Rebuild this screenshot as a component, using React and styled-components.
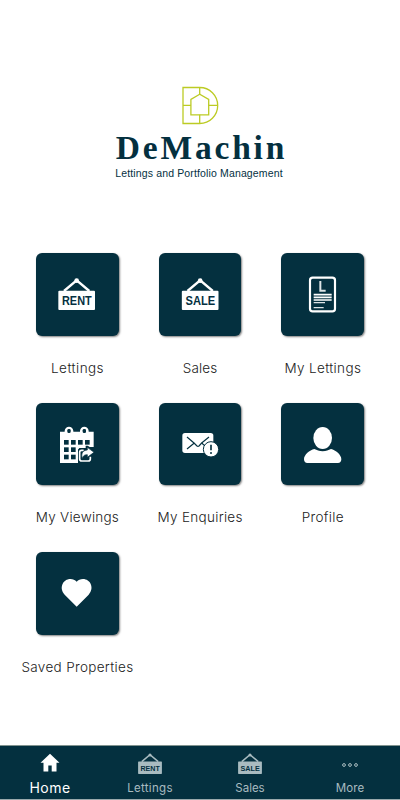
import React from 'react';
import styled, { createGlobalStyle } from 'styled-components';

const NAVY = '#04303f';

const GlobalStyle = createGlobalStyle`
  * {
    box-sizing: border-box;
  }

  body {
    margin: 0;
    background-color: #fff;
    font-family: 'Inter', 'Open Sans', sans-serif;
  }
`;

const Screen = styled.div`
  display: flex;
  flex-direction: column;
  width: 400px;
  height: 800px;
  overflow: hidden;
  background-color: #fff;
`;

const Header = styled.header`
  display: flex;
  flex-direction: column;
  align-items: center;
  height: 253px;
  padding-top: 86px;

  svg {
    display: block;
  }
`;

const BrandName = styled.h1`
  margin: 4px 0 0 3px;
  color: ${NAVY};
  font-family: 'Liberation Serif', serif;
  font-size: 33.5px;
  font-weight: 700;
  line-height: 38px;
  letter-spacing: 2.8px;
  white-space: nowrap;
`;

const Tagline = styled.p`
  margin: 0 2px 0 0;
  color: ${NAVY};
  font-family: 'Liberation Sans', sans-serif;
  font-size: 10.5px;
  line-height: 13px;
  letter-spacing: 0.14px;
  white-space: nowrap;
`;

const Menu = styled.main`
  display: grid;
  grid-template-columns: repeat(3, 1fr);
  grid-auto-rows: 149.6px;
  flex: 1;
  padding: 0 16px;
`;

const MenuItem = styled.div`
  display: flex;
  flex-direction: column;
  align-items: center;
`;

const Tile = styled.div`
  width: 82.5px;
  height: 82.5px;
  border-radius: 6px;
  background-color: ${NAVY};
  box-shadow: 1px 1px 2px rgba(0, 0, 0, 0.5);

  svg {
    display: block;
    width: 100%;
    height: 100%;
  }
`;

const Label = styled.span`
  margin-top: 22px;
  color: #222;
  font-size: 13.5px;
  font-weight: 300;
  line-height: 20px;
  letter-spacing: ${({ $spacing }) => $spacing}px;
  margin-right: ${({ $spacing }) => -$spacing}px;
  white-space: nowrap;
`;

const TabBar = styled.nav`
  display: flex;
  height: 55px;
  border-top: 1px solid #81938f;
  border-bottom: 1px solid #9aa9ac;
  background-color: ${NAVY};
`;

const Tab = styled.div`
  display: flex;
  flex: 1;
  flex-direction: column;
  align-items: center;
  justify-content: space-between;
  padding: 7px 0 2px;
  color: ${({ $active }) => ($active ? '#fff' : '#a9bbc0')};

  svg {
    display: block;
  }
`;

const TabLabel = styled.span`
  font-size: ${({ $size }) => $size}px;
  font-weight: 400;
  line-height: 18px;
  letter-spacing: ${({ $spacing }) => $spacing}px;
`;

const LogoMark = () => (
  <svg width='38' height='39' viewBox='0 0 38 39' fill='none' stroke='#bccb24' strokeWidth='1.3'>
    <path d='M2 1.5h16.7a18 18 0 0 1 0 36H2z' />
    <path d='M18.7 8.2l-8.8 5.2v15.4h17.8V13.4z' />
    <path d='M18.7 1.5v6.7M18.7 28.8v8.7M2 19.4h7.9M27.7 19.4h9' />
  </svg>
);

const SignShape = ({ text, color, ink }) => (
  <>
    <path d='M84 114l38-32 38 32' fill='none' stroke={color} strokeWidth='7' />
    <circle cx='122' cy='83' r='7' fill={color} />
    <rect x='67' y='113' width='110' height='58' rx='3' fill={color} />
    <text
      x='78'
      y='155.5'
      textLength='89'
      lengthAdjust='spacingAndGlyphs'
      fill={ink}
      fontFamily='"Liberation Sans", sans-serif'
      fontWeight='700'
      fontSize='37'
    >
      {text}
    </text>
  </>
);

const TileIcon = ({ children }) => <svg viewBox='0 0 247.5 247.5'>{children}</svg>;

const RentIcon = () => (
  <TileIcon>
    <SignShape text='RENT' color='#fff' ink={NAVY} />
  </TileIcon>
);

const SaleIcon = () => (
  <TileIcon>
    <g transform='translate(1.5 0)'>
      <SignShape text='SALE' color='#fff' ink={NAVY} />
    </g>
  </TileIcon>
);

const DocumentIcon = () => (
  <TileIcon>
    <g fill='none' stroke='#fff'>
      <rect x='87' y='74' width='75' height='101' rx='8' strokeWidth='6.5' />
      <path d='M118 84v29h16' strokeWidth='6' stroke='#dde4e6' />
      <path d='M98 125h54M98 133h54M98 141h54' strokeWidth='5' />
      <path d='M98 149h34M98 164h30' strokeWidth='4' stroke='#dde4e6' />
    </g>
  </TileIcon>
);

const CalendarIcon = () => (
  <TileIcon>
    <path
      fill='#fff'
      d='M72 86h14v-2a13 13 0 0 1 26 0v2h20v-2a13 13 0 0 1 26 0v2h15v46h-12l-6-4h-6v7h-19l-4 5v40H72z'
    />
    <g fill={NAVY}>
      <rect x='94' y='78' width='10' height='12' rx='4' />
      <rect x='140' y='78' width='10' height='12' rx='4' />
      {[84, 105, 126, 147].map(x => (
        <rect key={x} x={x} y='111' width='14' height='14' />
      ))}
      {[133, 155].map(y => (
        <React.Fragment key={y}>
          <rect x='84' y={y} width='14' height='14' />
          <rect x='105' y={y} width='14' height='14' />
        </React.Fragment>
      ))}
    </g>
    <rect x='126' y='137' width='48' height='43' rx='7' fill={NAVY} />
    <path
      d='M143 142h-6a6 6 0 0 0-6 6v20a6 6 0 0 0 6 6h20a6 6 0 0 0 6-6v-7'
      fill='none'
      stroke='#fff'
      strokeWidth='5'
    />
    <path
      fill='#fff'
      stroke={NAVY}
      strokeWidth='2'
      d='M154 133l20 15-20 15v-8c-9 0-13 3-15 12-5-16 2-25 15-26z'
    />
  </TileIcon>
);

const EnvelopeIcon = () => (
  <TileIcon>
    <g transform='translate(1 0)'>
      <rect x='69' y='90' width='93' height='60' rx='8' fill='#fff' />
      <g fill='none' stroke={NAVY} strokeWidth='3.5'>
        <path d='M83 102l21 18 9 9q3 2 6 0l8-9 22-18' />
        <path d='M83 138l22-18M127 120l12 11' />
      </g>
      <circle cx='155' cy='139' r='23' fill='#fff' stroke={NAVY} strokeWidth='3' />
      <path d='M155 125v17' stroke={NAVY} strokeWidth='5' />
      <circle cx='155' cy='150' r='3' fill={NAVY} />
    </g>
  </TileIcon>
);

const ProfileIcon = () => (
  <TileIcon>
    <ellipse cx='125' cy='105' rx='28' ry='33' fill='#fff' />
    <path
      fill='#fff'
      d='M100 138c8 2 14 7 25 7s17-5 25-7c14 3 31 17 31 31 0 7-4 11-10 11H79c-6 0-10-4-10-11 0-14 17-28 31-31z'
    />
  </TileIcon>
);

const HeartIcon = () => (
  <TileIcon>
    <path
      fill='#fff'
      d='M122 164l-36-36c-19-21-4-47 17-47 8 0 14 3 19 8 5-5 11-8 19-8 21 0 36 26 17 47z'
    />
  </TileIcon>
);

const HomeIcon = () => (
  <svg width='20' height='19' viewBox='0 0 20 19' fill='currentColor'>
    <path d='M10 .7L.5 9.7h3v8.8h4.8v-6h3.4v6h4.8V9.7h3z' />
  </svg>
);

const SmallSign = ({ text }) => (
  <svg width='24' height='21' viewBox='67 74 110 97'>
    <SignShape text={text} color='#a9bbc0' ink={NAVY} />
  </svg>
);

const MoreIcon = () => (
  <svg width='18' height='24' viewBox='0 0 18 24' fill='none' stroke='currentColor'>
    <circle cx='3' cy='12' r='1.4' />
    <circle cx='9' cy='12' r='1.4' />
    <circle cx='15' cy='12' r='1.4' />
  </svg>
);

const menuItems = [
  { label: 'Lettings', Icon: RentIcon, spacing: 0.45 },
  { label: 'Sales', Icon: SaleIcon, spacing: 0.15 },
  { label: 'My Lettings', Icon: DocumentIcon, spacing: 0.35 },
  { label: 'My Viewings', Icon: CalendarIcon, spacing: 0.25 },
  { label: 'My Enquiries', Icon: EnvelopeIcon, spacing: 0.3 },
  { label: 'Profile', Icon: ProfileIcon, spacing: 0.3 },
  { label: 'Saved Properties', Icon: HeartIcon, spacing: 0.33 },
];

const tabs = [
  { label: 'Home', icon: <HomeIcon />, active: true, size: 14, spacing: 0.5 },
  { label: 'Lettings', icon: <SmallSign text='RENT' />, size: 11.5, spacing: 0.3 },
  { label: 'Sales', icon: <SmallSign text='SALE' />, size: 11.5, spacing: 0 },
  { label: 'More', icon: <MoreIcon />, size: 11.5, spacing: 0.1 },
];

const App = () => {
  return (
    <>
      <GlobalStyle />
      <Screen>
        <Header>
          <LogoMark />
          <BrandName>DeMachin</BrandName>
          <Tagline>Lettings and Portfolio Management</Tagline>
        </Header>
        <Menu>
          {menuItems.map(({ label, Icon, spacing }) => (
            <MenuItem key={label}>
              <Tile>
                <Icon />
              </Tile>
              <Label $spacing={spacing}>{label}</Label>
            </MenuItem>
          ))}
        </Menu>
        <TabBar>
          {tabs.map(({ label, icon, active, size, spacing }) => (
            <Tab key={label} $active={active}>
              {icon}
              <TabLabel $size={size} $spacing={spacing}>
                {label}
              </TabLabel>
            </Tab>
          ))}
        </TabBar>
      </Screen>
    </>
  );
};

export default App;
